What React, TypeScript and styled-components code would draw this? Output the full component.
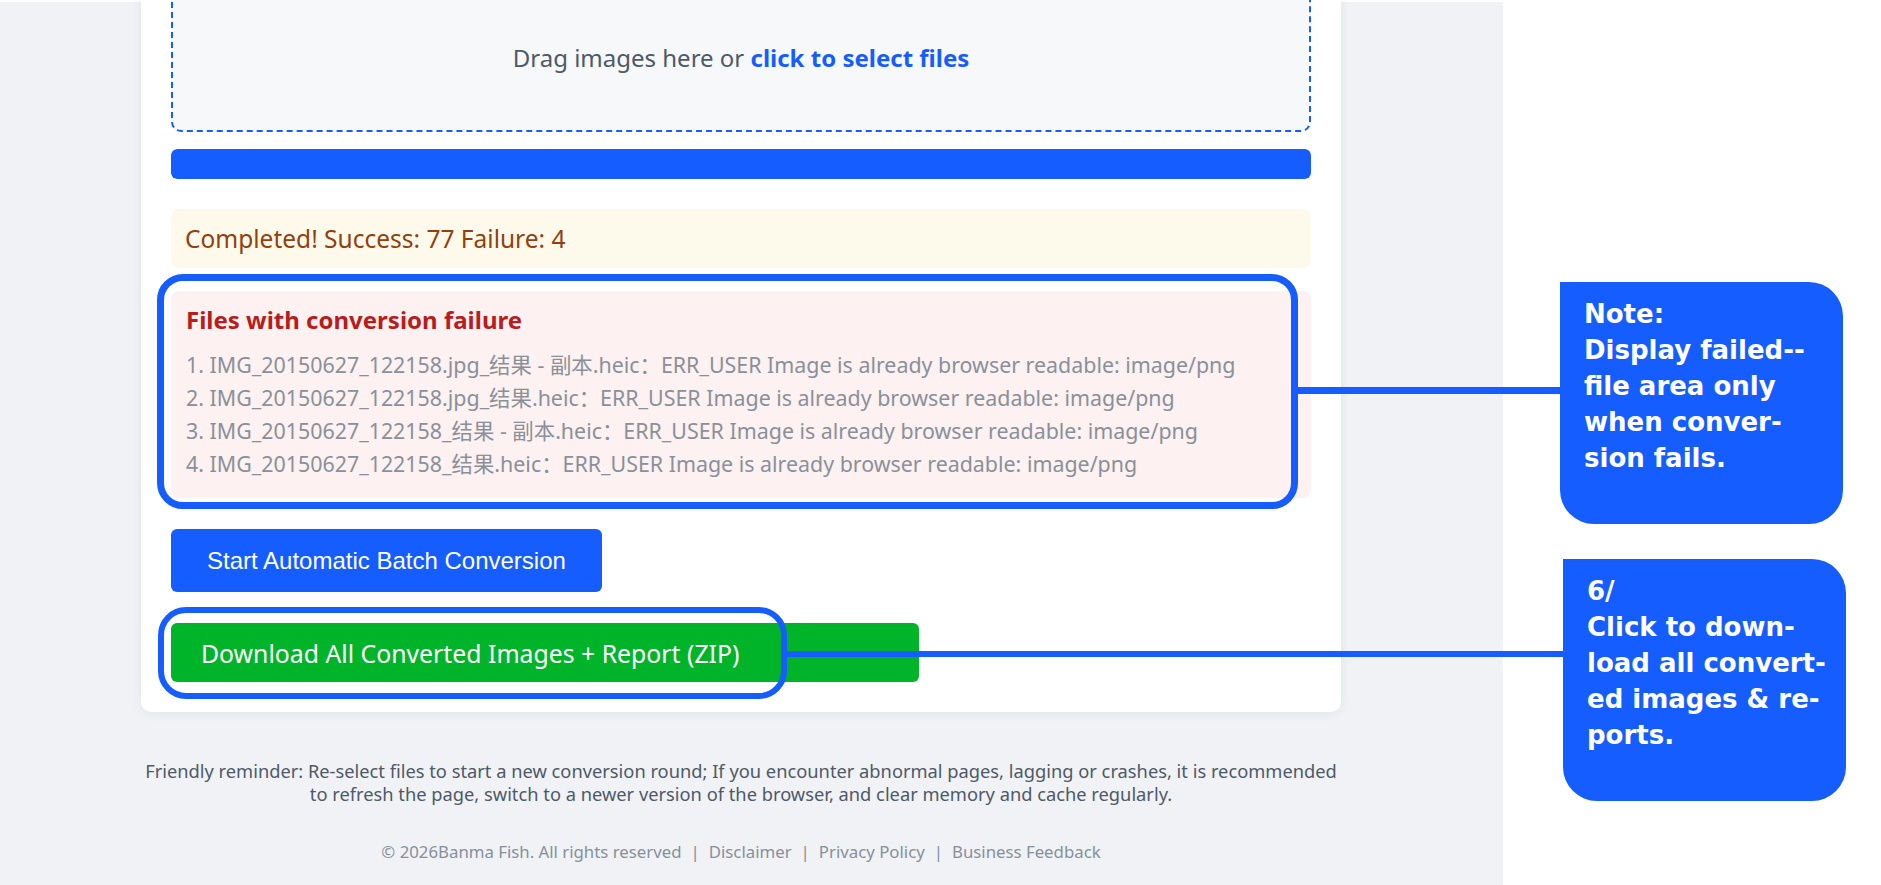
import React from "react";
import styled, { createGlobalStyle } from "styled-components";

const BLUE = "#165dff";

const Global = createGlobalStyle`
  html, body { margin: 0; padding: 0; background: #ffffff; }
  body { font-family: "Noto Sans", "Noto Sans CJK SC", sans-serif; }
  * { box-sizing: border-box; }
`;

const Canvas = styled.div`
  position: relative;
  display: flex;
  width: 1881px;
  height: 885px;
  overflow: hidden;
  background: #ffffff;
`;

const Shot = styled.div`
  width: 1503px;
  margin-top: 2px;
  background: #f0f2f5;
  display: flex;
  flex-direction: column;
  padding-left: 141px;
`;

const Card = styled.section`
  width: 1200px;
  margin-top: -50px;
  padding: 30px;
  background: #ffffff;
  border-radius: 10px;
  box-shadow: 0 2px 12px rgba(0, 0, 0, 0.06);
  display: flex;
  flex-direction: column;
`;

const DropZone = styled.div`
  height: 150px;
  border: 2px dashed ${BLUE};
  border-radius: 10px;
  background: #f7f8fa;
  display: flex;
  align-items: center;
  justify-content: center;
  font-size: 24px;
  color: #4e5969;
  white-space: pre;
`;

const PickLink = styled.span`
  color: ${BLUE};
  font-weight: 700;
`;

const Progress = styled.div`
  margin-top: 17px;
  height: 30px;
  border-radius: 6px;
  background: #e5e6eb;
  overflow: hidden;
`;

const ProgressFill = styled.div`
  height: 100%;
  background: ${BLUE};
  border-radius: 6px;
`;

const Status = styled.div`
  margin-top: 30px;
  height: 59px;
  padding: 0 14px;
  display: flex;
  align-items: center;
  background: #fefaeb;
  border-radius: 8px;
  color: #92400e;
  font-size: 24.5px;
`;

const FailBox = styled.div`
  margin-top: 23px;
  padding: 14px 15px 18px;
  background: #fdf1f1;
  border-radius: 8px;
`;

const FailTitle = styled.h3`
  margin: 0;
  font-size: 24px;
  line-height: 30px;
  font-weight: 700;
  color: #b91c1c;
`;

const FailList = styled.ol`
  margin: 13px 0 0;
  padding: 0;
  list-style: none;
`;

const FailItem = styled.li`
  font-size: 21.4px;
  line-height: 33px;
  color: #8a909a;
  white-space: nowrap;
`;

const StartButton = styled.button`
  align-self: flex-start;
  margin-top: 31px;
  height: 63px;
  padding: 0 36px;
  border: none;
  border-radius: 6px;
  background: ${BLUE};
  color: #ffffff;
  font-family: "Liberation Sans", Arial, sans-serif;
  font-size: 24px;
  cursor: pointer;
`;

const DownloadButton = styled.button`
  margin-top: 31px;
  width: 748px;
  height: 59px;
  padding: 0 0 0 30px;
  border: none;
  border-radius: 6px;
  background: #00b42a;
  color: #ffffff;
  text-align: left;
  font-family: "Noto Sans", "Noto Sans CJK SC", sans-serif;
  font-size: 24.8px;
  cursor: pointer;
`;

const Reminder = styled.p`
  width: 1200px;
  margin: 47px 0 0;
  text-align: center;
  font-size: 18.3px;
  line-height: 23px;
  color: #4e5969;
  white-space: nowrap;
`;

const Copyright = styled.p`
  width: 1200px;
  margin: 36px 0 0;
  text-align: center;
  font-size: 16.8px;
  line-height: 22px;
  color: #86909c;
`;

const Sep = styled.span`
  margin: 0 9px;
`;

const NoteColumn = styled.aside`
  display: flex;
  flex-direction: column;
  gap: 35px;
  padding-top: 282px;
`;

const Note = styled.div<{ $indent: number; $width: number }>`
  margin-left: ${(p) => p.$indent}px;
  width: ${(p) => p.$width}px;
  height: 242px;
  padding: 14px 6px 0 24px;
  background: ${BLUE};
  border-radius: 0 34px 34px 34px;
  color: #ffffff;
  font-family: "DejaVu Sans", "Noto Sans", sans-serif;
  font-weight: 700;
  font-size: 26px;
  line-height: 36px;
  white-space: pre;
`;

const Ring = styled.div<{ $x: number; $y: number; $w: number; $h: number; $r: number; $t: number }>`
  position: absolute;
  left: ${(p) => p.$x}px;
  top: ${(p) => p.$y}px;
  width: ${(p) => p.$w}px;
  height: ${(p) => p.$h}px;
  border: ${(p) => p.$t}px solid ${BLUE};
  border-radius: ${(p) => p.$r}px;
  pointer-events: none;
`;

const Leader = styled.div<{ $x: number; $y: number; $w: number; $t: number }>`
  position: absolute;
  left: ${(p) => p.$x}px;
  top: ${(p) => p.$y}px;
  width: ${(p) => p.$w}px;
  height: ${(p) => p.$t}px;
  background: ${BLUE};
  pointer-events: none;
`;

const failures = [
  "IMG_20150627_122158.jpg_结果 - 副本.heic：ERR_USER Image is already browser readable: image/png",
  "IMG_20150627_122158.jpg_结果.heic：ERR_USER Image is already browser readable: image/png",
  "IMG_20150627_122158_结果 - 副本.heic：ERR_USER Image is already browser readable: image/png",
  "IMG_20150627_122158_结果.heic：ERR_USER Image is already browser readable: image/png",
];

export default function App() {
  return (
    <>
      <Global />
      <Canvas>
        <Shot>
          <Card>
            <DropZone>
              {"Drag images here or "}
              <PickLink>click to select files</PickLink>
            </DropZone>
            <Progress>
              <ProgressFill style={{ width: "100%" }} />
            </Progress>
            <Status>Completed! Success: 77 Failure: 4</Status>
            <FailBox>
              <FailTitle>Files with conversion failure</FailTitle>
              <FailList>
                {failures.map((f, i) => (
                  <FailItem key={i}>
                    {i + 1}. {f}
                  </FailItem>
                ))}
              </FailList>
            </FailBox>
            <StartButton>Start Automatic Batch Conversion</StartButton>
            <DownloadButton>Download All Converted Images + Report (ZIP)</DownloadButton>
          </Card>
          <Reminder>
            Friendly reminder: Re-select files to start a new conversion round; If you encounter abnormal pages, lagging or crashes, it is recommended
            <br />
            to refresh the page, switch to a newer version of the browser, and clear memory and cache regularly.
          </Reminder>
          <Copyright>
            © 2026Banma Fish. All rights reserved<Sep>|</Sep>Disclaimer<Sep>|</Sep>Privacy Policy<Sep>|</Sep>Business Feedback
          </Copyright>
        </Shot>
        <NoteColumn>
          <Note $indent={57} $width={283}>
            {"Note:\nDisplay failed--\nfile area only\nwhen conver-\nsion fails."}
          </Note>
          <Note $indent={60} $width={283}>
            {"6/\nClick to down-\nload all convert-\ned images & re-\nports."}
          </Note>
        </NoteColumn>
        <Ring $x={157} $y={274} $w={1141} $h={235} $r={26} $t={7} />
        <Leader $x={1296} $y={387} $w={265} $t={7} />
        <Ring $x={158} $y={607} $w={629} $h={92} $r={28} $t={6} />
        <Leader $x={785} $y={651} $w={780} $t={6} />
      </Canvas>
    </>
  );
}
